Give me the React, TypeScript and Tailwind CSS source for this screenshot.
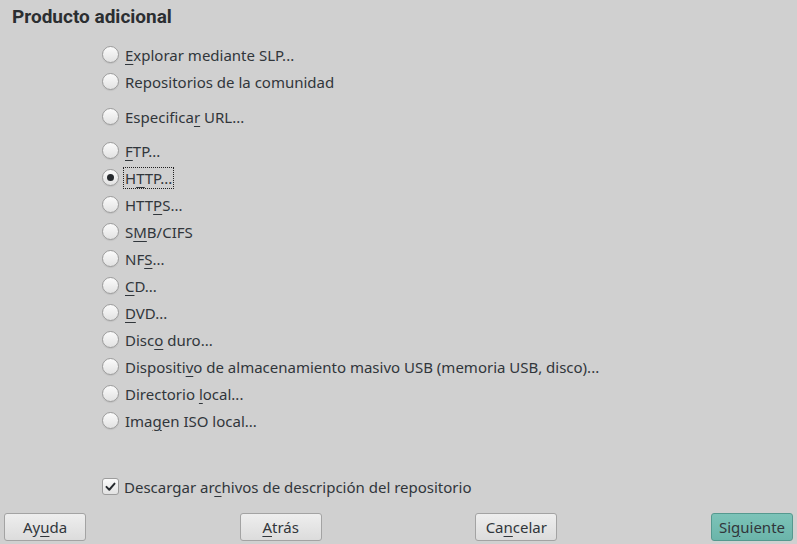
import type { ReactNode } from 'react'

const font = { fontFamily: '"Noto Sans", "DejaVu Sans", sans-serif' }

// label with one underlined mnemonic letter
function Mnemonic({ text, at }: { text: string; at?: number }) {
  if (at === undefined) return <>{text}</>
  return (
    <>
      {text.slice(0, at)}
      <span className="underline underline-offset-[3px] decoration-1">{text[at]}</span>
      {text.slice(at + 1)}
    </>
  )
}

function Radio({ checked = false }: { checked?: boolean }) {
  return (
    <span className="w-[17px] h-[17px] shrink-0 rounded-full border border-[#9c9c9c] bg-gradient-to-b from-[#fbfbfb] to-[#e2e2e2] shadow-[0_1px_1px_rgba(0,0,0,0.08)] flex items-center justify-center">
      {checked && <span className="w-[7px] h-[7px] rounded-full bg-[#262a2e]" />}
    </span>
  )
}

function RadioRow({ label, at, checked, focused }: { label: string; at?: number; checked?: boolean; focused?: boolean }) {
  return (
    <div className="h-[27px] flex items-center">
      <Radio checked={checked} />
      <span
        className={
          'ml-[4px] px-[1px] leading-[20px] border ' +
          (focused ? 'border-dotted border-[#202020]' : 'border-transparent')
        }
      >
        <Mnemonic text={label} at={at} />
      </span>
    </div>
  )
}

function Button({ children, primary }: { children: ReactNode; primary?: boolean }) {
  return (
    <button
      className={
        'w-[82px] h-[28px] rounded-[3px] border text-[15px] leading-none flex items-center justify-center ' +
        (primary
          ? 'border-[#55998f] bg-gradient-to-b from-[#7cc3b8] to-[#6bb5aa]'
          : 'border-[#a3a3a3] bg-gradient-to-b from-[#eeeeee] to-[#dcdcdc]')
      }
    >
      {children}
    </button>
  )
}

export default function App() {
  const protocols: { label: string; at?: number; checked?: boolean; focused?: boolean }[] = [
    { label: 'FTP...', at: 0 },
    { label: 'HTTP...', at: 1, checked: true, focused: true },
    { label: 'HTTPS...', at: 3 },
    { label: 'SMB/CIFS', at: 1 },
    { label: 'NFS...', at: 2 },
    { label: 'CD...', at: 0 },
    { label: 'DVD...', at: 0 },
    { label: 'Disco duro...', at: 4 },
    { label: 'Dispositivo de almacenamiento masivo USB (memoria USB, disco)...', at: 9 },
    { label: 'Directorio local...', at: 11 },
    { label: 'Imagen ISO local...', at: 3 },
  ]

  return (
    <div className="w-[797px] h-[544px] bg-[#d0d0d0] text-[#31363b] text-[15px] flex flex-col" style={font}>
      {/* Title */}
      <div className="h-[41px] pt-[5px] pl-[12px]">
        <h1
          className="text-[19px] leading-[24px] font-bold text-[#2b2e31]"
          style={{ fontFamily: 'Roboto, "Noto Sans", sans-serif' }}
        >
          Producto adicional
        </h1>
      </div>

      {/* Source options */}
      <div className="pl-[102px] flex flex-col">
        <RadioRow label="Explorar mediante SLP..." at={0} />
        <RadioRow label="Repositorios de la comunidad" />
        <div className="mt-[8px]">
          <RadioRow label="Especificar URL..." at={10} />
        </div>
        <div className="mt-[7px] flex flex-col">
          {protocols.map((p) => (
            <RadioRow key={p.label} {...p} />
          ))}
        </div>

        {/* Checkbox */}
        <div className="mt-[39px] h-[27px] flex items-center">
          <span className="w-[17px] h-[17px] shrink-0 rounded-[3px] border border-[#9c9c9c] bg-gradient-to-b from-[#fbfbfb] to-[#e2e2e2] flex items-center justify-center">
            <svg viewBox="0 0 16 16" className="w-[13px] h-[13px]">
              <path d="M3 8.5 L6.5 12 L13 4.5" fill="none" stroke="#262a2e" strokeWidth="2.4" strokeLinecap="round" strokeLinejoin="round" />
            </svg>
          </span>
          <span className="ml-[5px] leading-[20px]">
            <Mnemonic text="Descargar archivos de descripción del repositorio" at={12} />
          </span>
        </div>
      </div>

      <div className="flex-1" />

      {/* Bottom buttons */}
      <div className="px-[4px] pb-[3px] flex justify-between">
        <Button><Mnemonic text="Ayuda" at={2} /></Button>
        <Button><Mnemonic text="Atrás" at={0} /></Button>
        <Button><Mnemonic text="Cancelar" at={2} /></Button>
        <Button primary><Mnemonic text="Siguiente" at={2} /></Button>
      </div>
    </div>
  )
}
